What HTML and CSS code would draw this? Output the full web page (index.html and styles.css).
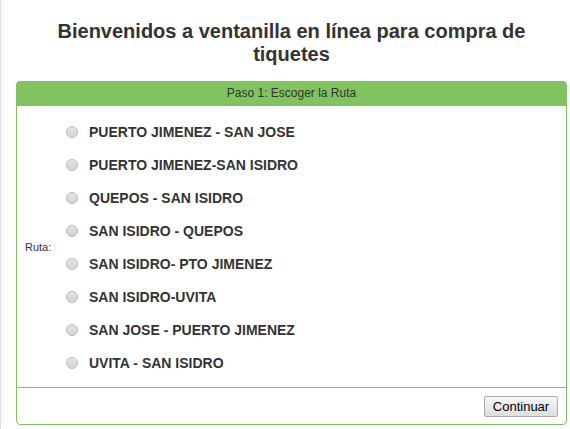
FILE: index.html
```html
<!DOCTYPE html>
<html lang="es">
<head>
<meta charset="utf-8">
<title>Ventanilla en línea</title>
<link rel="stylesheet" href="styles.css">
</head>
<body>
<div class="page">
  <h1 class="title">Bienvenidos a ventanilla en línea para compra de tiquetes</h1>
  <form class="panel">
    <div class="panel-head">Paso 1: Escoger la Ruta</div>
    <div class="panel-body">
      <div class="field-label">Ruta:</div>
      <div class="routes">
        <label class="route"><input type="radio" name="ruta"><span>PUERTO JIMENEZ - SAN JOSE</span></label>
        <label class="route"><input type="radio" name="ruta"><span>PUERTO JIMENEZ-SAN ISIDRO</span></label>
        <label class="route"><input type="radio" name="ruta"><span>QUEPOS - SAN ISIDRO</span></label>
        <label class="route"><input type="radio" name="ruta"><span>SAN ISIDRO - QUEPOS</span></label>
        <label class="route"><input type="radio" name="ruta"><span>SAN ISIDRO- PTO JIMENEZ</span></label>
        <label class="route"><input type="radio" name="ruta"><span>SAN ISIDRO-UVITA</span></label>
        <label class="route"><input type="radio" name="ruta"><span>SAN JOSE - PUERTO JIMENEZ</span></label>
        <label class="route"><input type="radio" name="ruta"><span>UVITA - SAN ISIDRO</span></label>
      </div>
    </div>
    <div class="panel-foot">
      <button type="button" class="btn">Continuar</button>
    </div>
  </form>
</div>
</body>
</html>
```
FILE: styles.css
```css
html, body {
  margin: 0;
  padding: 0;
  background: #fff;
}
body {
  font-family: "Liberation Sans", Arial, sans-serif;
  color: #333;
}
.page {
  border-left: 1px dotted #c8c8c8;
  min-height: 429px;
  box-sizing: border-box;
  padding: 20px 3px 0 15px;
}
.title {
  margin: 0 auto 15px;
  max-width: 500px;
  font-size: 20px;
  line-height: 23px;
  font-weight: bold;
  text-align: center;
  color: #333;
}
.panel {
  margin: 0;
  border: 1px solid #80c35f;
  border-radius: 4px;
  width: 551px;
  box-sizing: border-box;
}
.panel-head {
  background: #80c35f;
  height: 25px;
  line-height: 25px;
  margin-top: -1px;
  border-radius: 3px 3px 0 0;
  text-align: center;
  font-size: 12px;
  color: #333;
}
.panel-body {
  display: flex;
  align-items: center;
  padding: 9px 0 8px;
}
.field-label {
  width: 41px;
  padding-left: 8px;
  font-size: 11px;
  color: #333;
}
.routes {
  display: flex;
  flex-direction: column;
}
.route {
  display: flex;
  align-items: center;
  height: 33px;
  font-size: 14px;
  font-weight: bold;
  color: #333;
}
.route input {
  appearance: none;
  -webkit-appearance: none;
  width: 12px;
  height: 12px;
  margin: 0 11px 0 0;
  border: 1px solid #b9b9b9;
  border-radius: 50%;
  background: linear-gradient(#e6e6e6, #d2d2d2);
  box-sizing: border-box;
}
.panel-foot {
  border-top: 1px solid #80c35f;
  display: flex;
  justify-content: flex-end;
  padding: 8px 8px 7px;
}
.btn {
  font-family: "Liberation Sans", Arial, sans-serif;
  font-size: 13px;
  color: #000;
  height: 21px;
  width: 74px;
  padding: 0;
  border: 1px solid #a9a9a9;
  border-radius: 2px;
  background: linear-gradient(#f6f6f6, #dedede);
}
```
